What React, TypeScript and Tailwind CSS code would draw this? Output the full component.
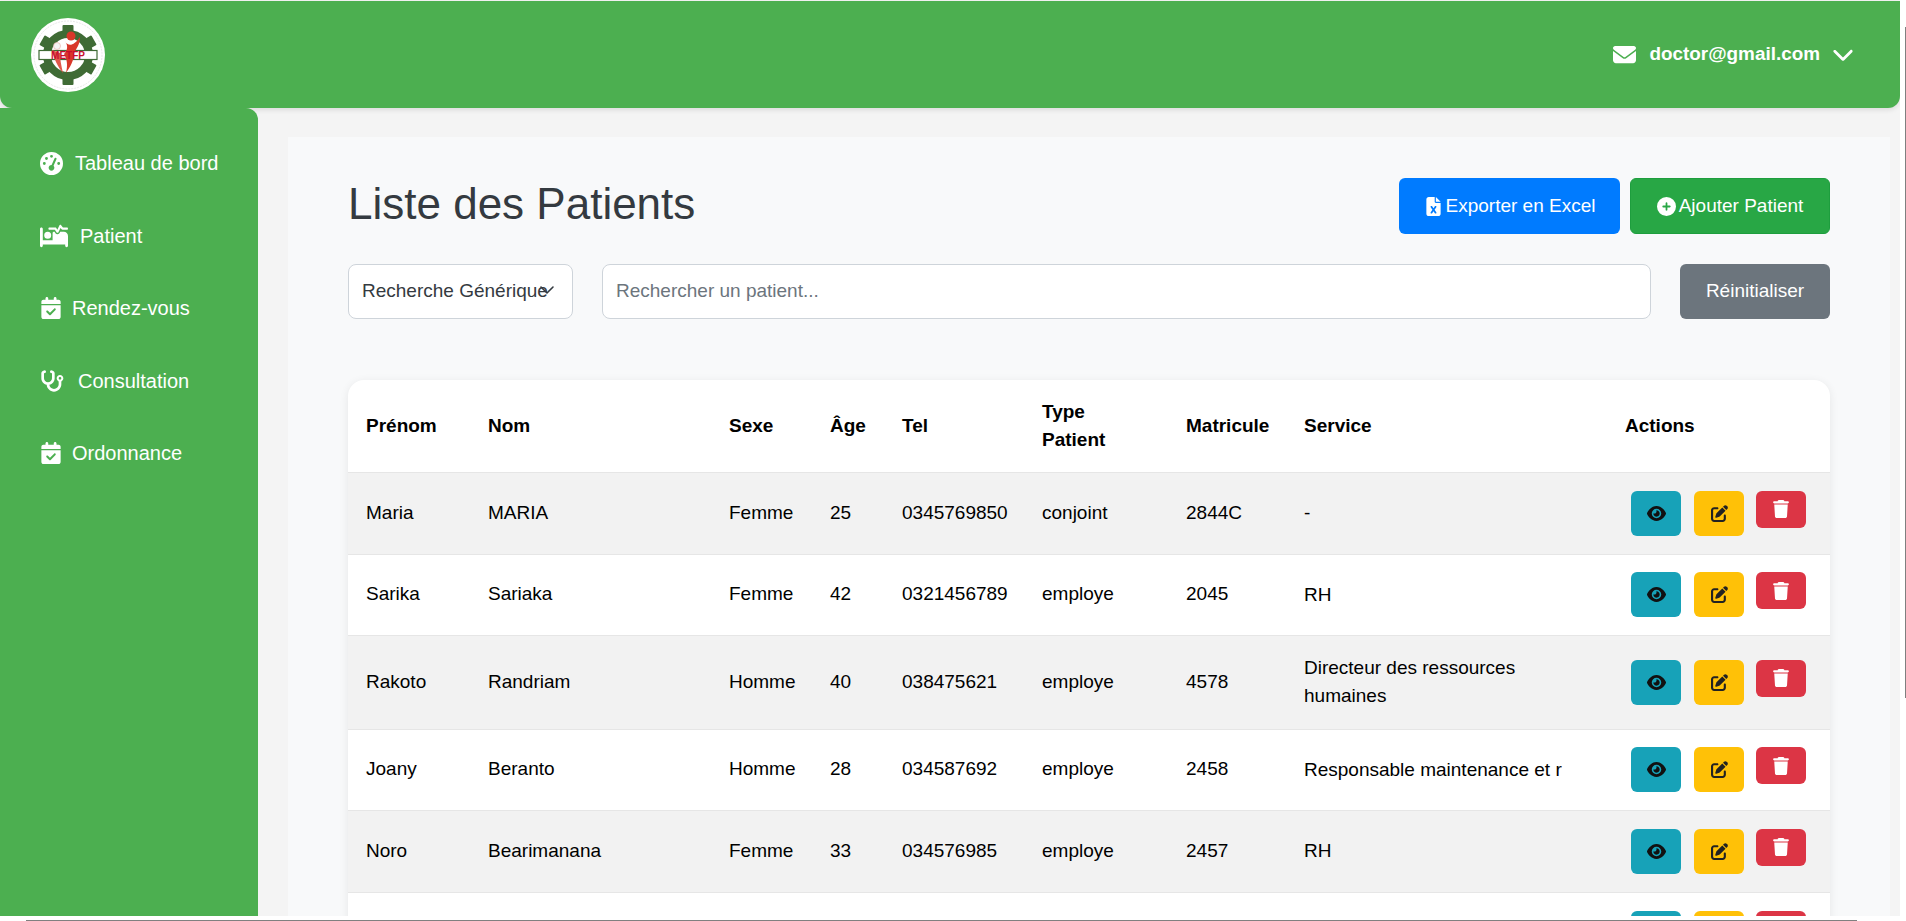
import { FaBedPulse, FaCalendarCheck, FaChevronDown, FaCirclePlus, FaEnvelope, FaEye, FaFileExcel, FaGaugeHigh, FaPenToSquare, FaStethoscope, FaTrash } from 'react-icons/fa6'

const patients = [
  { prenom: 'Maria', nom: 'MARIA', sexe: 'Femme', age: '25', tel: '0345769850', type: 'conjoint', matricule: '2844C', service: '-', height: 'h-[82px]' },
  { prenom: 'Sarika', nom: 'Sariaka', sexe: 'Femme', age: '42', tel: '0321456789', type: 'employe', matricule: '2045', service: 'RH', height: 'h-[81px]' },
  { prenom: 'Rakoto', nom: 'Randriam', sexe: 'Homme', age: '40', tel: '038475621', type: 'employe', matricule: '4578', service: 'Directeur des ressources humaines', height: 'h-[94px]' },
  { prenom: 'Joany', nom: 'Beranto', sexe: 'Homme', age: '28', tel: '034587692', type: 'employe', matricule: '2458', service: 'Responsable maintenance et r', height: 'h-[81px]' },
  { prenom: 'Noro', nom: 'Bearimanana', sexe: 'Femme', age: '33', tel: '034576985', type: 'employe', matricule: '2457', service: 'RH', height: 'h-[82px]' },
  { prenom: '', nom: '', sexe: '', age: '', tel: '', type: '', matricule: '', service: '', height: 'h-[82px]' },
]

const navItems = [
  { label: 'Tableau de bord', icon: FaGaugeHigh, size: 'text-[23px]', gap: 'gap-[12px]' },
  { label: 'Patient', icon: FaBedPulse, size: 'text-[28px]', gap: 'gap-[12px]' },
  { label: 'Rendez-vous', icon: FaCalendarCheck, size: 'text-[22px]', gap: 'gap-[10px]' },
  { label: 'Consultation', icon: FaStethoscope, size: 'text-[24px]', gap: 'gap-[14px]' },
  { label: 'Ordonnance', icon: FaCalendarCheck, size: 'text-[22px]', gap: 'gap-[10px]' },
]

const headers = ['Prénom', 'Nom', 'Sexe', 'Âge', 'Tel', 'Type Patient', 'Matricule', 'Service', 'Actions']

function Logo() {
  return (
    <svg width="76" height="76" viewBox="0 0 76 76">
      <circle cx="38" cy="38" r="37" fill="#fff" />
      <circle cx="38" cy="38" r="34" fill="none" stroke="#d8d8d8" strokeWidth="0.6" strokeDasharray="2 1" />
      <circle cx="38" cy="38" r="21" fill="none" stroke="#3f6b35" strokeWidth="8" />
      <g fill="#3f6b35">
        <rect x="32.5" y="8" width="11" height="9" rx="1" />
        <rect x="32.5" y="8" width="11" height="9" rx="1" transform="rotate(60 38 38)" />
        <rect x="32.5" y="8" width="11" height="9" rx="1" transform="rotate(120 38 38)" />
        <rect x="32.5" y="8" width="11" height="9" rx="1" transform="rotate(180 38 38)" />
        <rect x="32.5" y="8" width="11" height="9" rx="1" transform="rotate(240 38 38)" />
        <rect x="32.5" y="8" width="11" height="9" rx="1" transform="rotate(300 38 38)" />
      </g>
      <rect x="9" y="33.5" width="58" height="9" fill="#fff" stroke="#3f6b35" strokeWidth="1.2" />
      <circle cx="27" cy="29" r="3.5" fill="#f4f4f4" stroke="#e8a8a0" strokeWidth="0.6" />
      <path d="M22 33C24 42 28 50 33 56 31 48 30 42 30 36Z" fill="#e0574a" />
      <circle cx="41" cy="19" r="4.5" fill="#d9372a" />
      <path d="M35 24C38 30 44 29 50 20 50 28 46 32 44 36 44 44 40 50 36 56 38 48 37 42 34 37 38 33 38 28 35 24Z" fill="#d9372a" />
      <text x="38" y="41.5" textAnchor="middle" fontSize="10" fontWeight="700" fill="#c8102e">METFP</text>
    </svg>
  )
}

export default function App() {
  return (
    <div className="relative h-[921px] overflow-hidden bg-white font-['Liberation_Sans',Arial,sans-serif] text-[19px] text-black">
      <div className="h-[916px] w-[1900px] overflow-hidden bg-[#f4f4f4]">
        <header className="mt-px flex h-[107px] items-center justify-between rounded-b-xl bg-[#4caf50] pl-[30px] pr-[46px] shadow-[0_2px_5px_rgba(0,0,0,0.1)]">
          <Logo />
          <div className="flex items-center font-bold text-white">
            <FaEnvelope className="text-[23px]" />
            <span className="ml-[13px] text-[18.9px]">doctor@gmail.com</span>
            <FaChevronDown className="ml-[12px] text-[22px]" />
          </div>
        </header>

        <div className="flex h-[808px]">
          <aside className="w-[258px] shrink-0 rounded-tr-xl bg-[#4caf50] pl-[40px] pt-[19px] text-white">
            {navItems.map(item => (
              <div key={item.label} className={`flex h-[72.5px] items-center text-[20px] ${item.gap}`}>
                <item.icon className={item.size} />
                {item.label}
              </div>
            ))}
          </aside>

          <main className="flex-1 pl-[30px] pr-[10px] pt-[29px]">
            <div className="h-[900px] bg-[#f8f9fa] px-[60px] pt-[41px]">
              <div className="flex items-center justify-between">
                <h1 className="mb-[5px] text-[44px] leading-[48px] text-[#343a40]">Liste des Patients</h1>
                <div className="flex gap-[10px] text-[19px] text-white">
                  <button className="flex h-[56px] w-[221px] items-center justify-center gap-[3px] rounded-md bg-[#007bff]">
                    <FaFileExcel className="text-[19px]" />
                    Exporter en Excel
                  </button>
                  <button className="flex h-[56px] w-[200px] items-center justify-center gap-[3px] rounded-md border border-[#1e9e3e] bg-[#28a745]">
                    <FaCirclePlus className="text-[19px]" />
                    Ajouter Patient
                  </button>
                </div>
              </div>

              <div className="mt-[30px] flex items-center">
                <div className="relative flex h-[55px] w-[225px] items-center whitespace-nowrap rounded-lg border border-[#ced4da] bg-white pl-[13px] text-[#343a40]">
                  Recherche Générique
                  <svg className="absolute left-[190px] top-[19px]" width="16" height="12" viewBox="0 0 16 12" fill="none" stroke="#343a40" strokeWidth="1.6" strokeLinecap="round" strokeLinejoin="round">
                    <path d="M2 3l6 6 6-6" />
                  </svg>
                </div>
                <div className="ml-[29px] flex h-[55px] flex-1 items-center rounded-lg border border-[#ced4da] bg-white pl-[13px] text-[#6c757d]">
                  Rechercher un patient...
                </div>
                <button className="ml-[29px] h-[55px] w-[150px] rounded-md bg-[#6c757d] text-white">Réinitialiser</button>
              </div>

              <div className="mt-[61px] overflow-hidden rounded-t-2xl bg-white shadow-[0_2px_10px_rgba(0,0,0,0.08)]">
                <table className="w-full table-fixed border-collapse text-left">
                  <colgroup>
                    <col className="w-[122px]" />
                    <col className="w-[241px]" />
                    <col className="w-[101px]" />
                    <col className="w-[72px]" />
                    <col className="w-[140px]" />
                    <col className="w-[144px]" />
                    <col className="w-[118px]" />
                    <col className="w-[321px]" />
                    <col />
                  </colgroup>
                  <thead>
                    <tr className="h-[92px]">
                      {headers.map(h => (
                        <th key={h} className="px-[18px] font-bold leading-[28px]">{h}</th>
                      ))}
                    </tr>
                  </thead>
                  <tbody>
                    {patients.map((p, i) => (
                      <tr key={i} className={`border-t border-[#e6e6e6] ${p.height} ${i % 2 === 0 ? 'bg-[#f2f2f2]' : 'bg-white'}`}>
                        <td className="px-[18px]">{p.prenom}</td>
                        <td className="px-[18px]">{p.nom}</td>
                        <td className="px-[18px]">{p.sexe}</td>
                        <td className="px-[18px]">{p.age}</td>
                        <td className="px-[18px]">{p.tel}</td>
                        <td className="px-[18px]">{p.type}</td>
                        <td className="px-[18px]">{p.matricule}</td>
                        <td className="px-[18px] leading-[28px]">{p.service}</td>
                        <td className="pl-[24px]">
                          <div className="flex items-start">
                            <button className="flex h-[45px] w-[50px] items-center justify-center rounded-md bg-[#17a2b8] text-[19px] text-[#111]"><FaEye /></button>
                            <button className="ml-[13px] flex h-[45px] w-[50px] items-center justify-center rounded-md bg-[#ffc107] text-[17px] text-[#222]"><FaPenToSquare /></button>
                            <button className="ml-[12px] flex h-[37px] w-[50px] items-center justify-center rounded-md bg-[#dc3545] text-[18px] text-white"><FaTrash /></button>
                          </div>
                        </td>
                      </tr>
                    ))}
                  </tbody>
                </table>
              </div>
            </div>
          </main>
        </div>
      </div>

      {/* browser window edge, bottom and right */}
      <div className="absolute bottom-0 left-[26px] h-px w-[1831px] bg-[#808080]" />
      <div className="absolute right-0 top-[27px] h-[671px] w-px bg-[#808080]" />
    </div>
  )
}
